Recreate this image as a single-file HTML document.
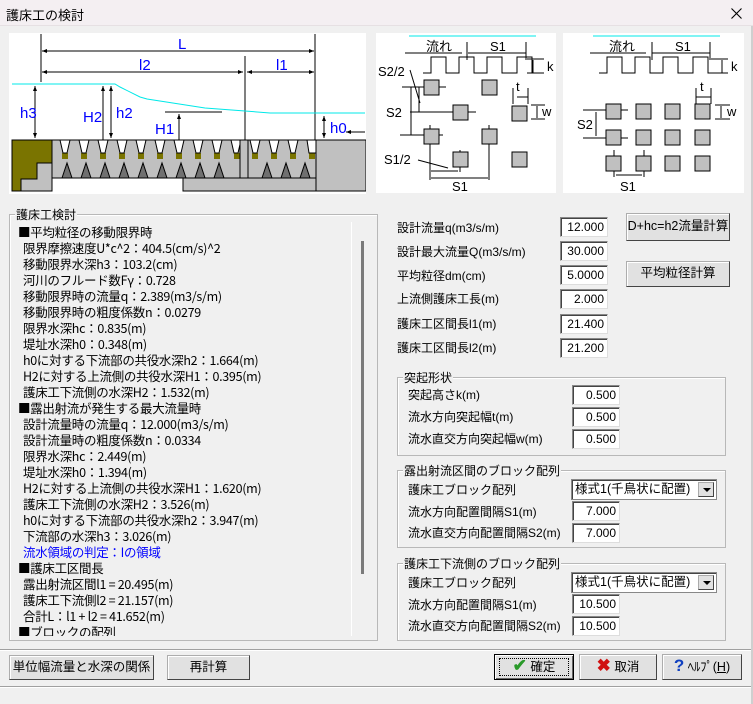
<!DOCTYPE html>
<html><head><meta charset="utf-8"><style>
*{box-sizing:border-box;margin:0;padding:0}
body{width:753px;height:704px;background:#f0f0f0;font-family:"Liberation Sans","Noto Sans CJK JP",sans-serif;font-size:12px;color:#000;position:relative;overflow:hidden}
.a{position:absolute}
#title{left:0;top:0;width:753px;height:26px;background:#f4eff2;border-bottom:1px solid #e6e0e3}
#title span{position:absolute;left:6px;top:5px;font-size:13px}
.grp{position:absolute;border:1px solid #b8b8b8;box-shadow:inset 1px 1px 0 #fff}
.grp .lg{position:absolute;top:-9px;left:5px;background:#f0f0f0;padding:0 1px;font-size:12px}
.lst{font-family:"Noto Sans CJK JP",monospace;font-size:12.5px;line-height:16px;white-space:pre;letter-spacing:-0.3px}
.in{position:absolute;background:#fff;border:1px solid #888;border-right-color:#ddd;border-bottom-color:#ddd;box-shadow:inset 1px 1px 0 #444;text-align:right;padding-right:3px;font-size:12px;line-height:18px;height:20px}
.lb{position:absolute;font-size:12px}
.btn{position:absolute;background:#e1e1e1;border:1px solid #adadad;border-right-color:#444;border-bottom-color:#444;box-shadow:inset 1px 1px 0 #fff;text-align:center;font-size:12.5px}
.cb{position:absolute;background:#fff;border:1px solid #888;box-shadow:inset 1px 1px 0 #444;font-size:12.5px;line-height:18px;padding-left:3px;height:21px}
.cb i{position:absolute;right:2px;top:2px;width:16px;height:15px;background:#e1e1e1;border:1px solid #aaa;border-right-color:#444;border-bottom-color:#444}
.cb i:after{content:"";position:absolute;left:4px;top:5px;border-left:4px solid transparent;border-right:4px solid transparent;border-top:4px solid #000}
</style></head><body>
<div id="title" class="a"><span>護床工の検討</span>
<svg class="a" style="left:731px;top:8px" width="11" height="11"><path d="M0.5 0.5L10.5 10.5M10.5 0.5L0.5 10.5" stroke="#000" stroke-width="1.1"/></svg></div>
<div class="a" style="left:751px;top:26px;width:2px;height:678px;background:#cfcfcf"></div>

<!-- main diagram -->
<svg class="a" style="left:9px;top:33px" width="357" height="161" viewBox="9 33 357 161">
<rect x="9" y="33" width="357" height="161" fill="#fff"/>
<g stroke="#000" stroke-width="1" fill="none">
<line x1="41" y1="34" x2="41" y2="82"/><line x1="315" y1="34" x2="315" y2="140"/><line x1="245" y1="56" x2="245" y2="140"/>
<line x1="42" y1="51" x2="314" y2="51"/><line x1="42" y1="72" x2="243" y2="72"/><line x1="247" y1="72" x2="314" y2="72"/>
<line x1="35" y1="86" x2="35" y2="138"/><line x1="103" y1="86" x2="103" y2="148"/><line x1="111" y1="86" x2="111" y2="138"/>
<line x1="165" y1="112" x2="222" y2="112"/><line x1="179" y1="114" x2="179" y2="148"/>
<line x1="324" y1="116" x2="324" y2="138"/><line x1="346" y1="132" x2="365" y2="132"/>
</g>
<g fill="#000">
<path d="M42 51l5-2v4zM314 51l-5-2v4zM42 72l5-2v4zM243 72l-5-2v4zM247 72l5-2v4zM314 72l-5-2v4z"/>
<path d="M35 86l-2 5h4zM35 138l-2-5h4zM103 86l-2 5h4zM103 148l-2-5h4zM111 86l-2 5h4zM111 138l-2-5h4zM179 114l-2 5h4zM179 148l-2-5h4zM324 116l-2 5h4zM324 138l-2-5h4zM346 132l5-2v4z"/>
</g>
<polyline points="12,84 115,84 120,87 140,97 147,99 205,108 245,111 270,113 365,113" stroke="#00e8e8" fill="none" stroke-width="1"/>
<g font-family="Liberation Sans,sans-serif" font-size="15" fill="#0000ff">
<text x="178" y="49">L</text><text x="139" y="70">l2</text><text x="276" y="70">l1</text>
<text x="20" y="118">h3</text><text x="83" y="122">H2</text><text x="116" y="118">h2</text><text x="155" y="134">H1</text><text x="330" y="133">h0</text>
</g>
<rect x="12" y="140" width="40" height="51" fill="#7a7400" stroke="#000"/>
<path d="M21 191v-12h16v-16h15v28z" fill="#c0c0c0" stroke="#000"/>
<rect x="52" y="140" width="264" height="38" fill="#c0c0c0" stroke="#000"/>
<g fill="#7a7400">
<path d="M62 153h6v6h-6zM81 153h6v6h-6zM100 153h6v6h-6zM119 153h6v6h-6zM138 153h6v6h-6zM157 153h6v6h-6zM176 153h6v6h-6zM195 153h6v6h-6zM214 153h6v6h-6zM234 153h6v6h-6zM252 153h6v6h-6zM271 153h6v6h-6zM290 153h6v6h-6zM309 153h6v6h-6z"/>
</g>
<g fill="#707070" stroke="#000">
<path d="M62 178l5-15 5 15zM81 178l5-15 5 15zM100 178l5-15 5 15zM119 178l5-15 5 15zM138 178l5-15 5 15zM157 178l5-15 5 15zM176 178l5-15 5 15zM195 178l5-15 5 15zM214 178l5-15 5 15zM262 178l5-15 5 15zM281 178l5-15 5 15zM300 178l5-15 5 15z"/>
</g>
<g fill="#fff" stroke="#000">
<path d="M60 140h10l-3 13h-4zM79 140h10l-3 13h-4zM98 140h10l-3 13h-4zM117 140h10l-3 13h-4zM136 140h10l-3 13h-4zM155 140h10l-3 13h-4zM174 140h10l-3 13h-4zM193 140h10l-3 13h-4zM212 140h10l-3 13h-4zM231 140h10l-3 13h-4zM250 140h10l-3 13h-4zM269 140h10l-3 13h-4zM288 140h10l-3 13h-4zM307 140h9v13h-7z"/>
</g>
<rect x="240" y="140" width="8" height="38" fill="#c0c0c0" stroke="#000"/>
<rect x="183" y="178" width="133" height="13" fill="#c0c0c0" stroke="#000"/>
<rect x="316" y="140" width="50" height="51" fill="#c0c0c0" stroke="#000"/>
</svg>

<!-- right diagrams -->
<svg class="a" style="left:375px;top:33px" width="370" height="161" viewBox="375 33 370 161" font-family="Liberation Sans,Noto Sans CJK JP,sans-serif" font-size="13">
<rect x="376" y="33" width="180" height="160" fill="#fff"/><rect x="563" y="33" width="181" height="160" fill="#fff"/>
<line x1="409" y1="36" x2="536" y2="36" stroke="#00e8e8"/><line x1="593" y1="36" x2="720" y2="36" stroke="#00e8e8"/>
<g stroke="#000" fill="none">
<line x1="405" y1="53" x2="462" y2="53"/><line x1="468" y1="53" x2="526" y2="53"/><line x1="467" y1="42" x2="467" y2="60"/><line x1="526" y1="42" x2="526" y2="60"/>
<path d="M423 73h8v-16h15v16h13v-16h15v16h13v-16h15v16h15v-16h15v16h11"/>
<line x1="533" y1="60" x2="533" y2="73"/><line x1="527" y1="59" x2="544" y2="59"/><line x1="527" y1="73" x2="544" y2="73"/>
<line x1="402" y1="87" x2="446" y2="87"/><line x1="411" y1="87" x2="411" y2="135"/><line x1="419" y1="87" x2="419" y2="112"/>
<line x1="410" y1="112" x2="476" y2="112"/><line x1="400" y1="135" x2="443" y2="135"/>
<line x1="410" y1="70" x2="420" y2="103"/><line x1="418" y1="160" x2="448" y2="168"/>
<line x1="430" y1="125" x2="430" y2="180"/><line x1="489" y1="125" x2="489" y2="180"/><line x1="460" y1="150" x2="460" y2="172"/>
<line x1="431" y1="171" x2="458" y2="171"/><line x1="431" y1="178" x2="488" y2="178"/>
<line x1="517" y1="97" x2="528" y2="97"/>
<line x1="513" y1="88" x2="513" y2="104"/><line x1="528" y1="88" x2="528" y2="104"/><line x1="531" y1="105" x2="545" y2="105"/><line x1="531" y1="119" x2="545" y2="119"/><line x1="537" y1="106" x2="537" y2="118"/>
<line x1="590" y1="53" x2="646" y2="53"/><line x1="652" y1="53" x2="710" y2="53"/><line x1="652" y1="42" x2="652" y2="60"/><line x1="710" y1="42" x2="710" y2="60"/>
<path d="M599 73h8v-16h15v16h13v-16h15v16h13v-16h15v16h15v-16h15v16h11"/>
<line x1="722" y1="60" x2="722" y2="73"/><line x1="711" y1="59" x2="728" y2="59"/><line x1="711" y1="73" x2="728" y2="73"/>
<line x1="696" y1="97" x2="711" y2="97"/><line x1="696" y1="88" x2="696" y2="104"/><line x1="711" y1="88" x2="711" y2="104"/>
<line x1="715" y1="105" x2="730" y2="105"/><line x1="715" y1="119" x2="730" y2="119"/><line x1="721" y1="106" x2="721" y2="118"/>
<line x1="583" y1="110" x2="628" y2="110"/><line x1="583" y1="138" x2="628" y2="138"/><line x1="596" y1="112" x2="596" y2="136"/>
<line x1="614" y1="150" x2="614" y2="177"/><line x1="644" y1="150" x2="644" y2="177"/><line x1="616" y1="175" x2="642" y2="175"/>
</g>
<g fill="#c0c0c0" stroke="#000">
<rect x="424" y="80" width="15" height="15"/><rect x="482" y="80" width="15" height="15"/><rect x="512" y="106" width="15" height="15"/>
<rect x="453" y="105" width="15" height="15"/><rect x="424" y="129" width="15" height="15"/><rect x="482" y="129" width="15" height="15"/>
<rect x="453" y="152" width="15" height="15"/><rect x="512" y="152" width="15" height="15"/>
<rect x="606" y="104" width="15" height="15"/><rect x="636" y="104" width="15" height="15"/><rect x="665" y="104" width="15" height="15"/><rect x="695" y="104" width="15" height="15"/>
<rect x="606" y="130" width="15" height="15"/><rect x="636" y="130" width="15" height="15"/><rect x="665" y="130" width="15" height="15"/><rect x="695" y="130" width="15" height="15"/>
<rect x="606" y="156" width="15" height="15"/><rect x="636" y="156" width="15" height="15"/><rect x="665" y="156" width="15" height="15"/><rect x="695" y="156" width="15" height="15"/>
</g>
<g fill="#000">
<text x="426" y="51">流れ</text><text x="490" y="51">S1</text><text x="547" y="71">k</text>
<text x="378" y="76">S2/2</text><text x="386" y="117">S2</text><text x="384" y="164">S1/2</text><text x="452" y="191">S1</text>
<text x="516" y="91">t</text><text x="542" y="116">w</text>
<text x="609" y="51">流れ</text><text x="675" y="51">S1</text><text x="731" y="71">k</text>
<text x="700" y="91">t</text><text x="727" y="116">w</text><text x="577" y="129">S2</text><text x="620" y="191">S1</text>
</g>
</svg>

<!-- left group -->
<div class="grp" style="left:9px;top:214px;width:369px;height:427px"><span class="lg">護床工検討</span></div>
<div class="a" style="left:361px;top:241px;width:3px;height:333px;background:#7a7a7a"></div>
<div class="a" style="left:351px;top:222px;width:1px;height:414px;background:#fff"></div>
<div class="a lst" style="left:18px;top:224px;height:412px;overflow:hidden">■平均粒径の移動限界時
  限界摩擦速度U*c^2：404.5(cm/s)^2
  移動限界水深h3：103.2(cm)
  河川のフルード数Fγ：0.728
  移動限界時の流量q：2.389(m3/s/m)
  移動限界時の粗度係数n：0.0279
  限界水深hc：0.835(m)
  堤址水深h0：0.348(m)
  h0に対する下流部の共役水深h2：1.664(m)
  H2に対する上流側の共役水深H1：0.395(m)
  護床工下流側の水深H2：1.532(m)
■露出射流が発生する最大流量時
  設計流量時の流量q：12.000(m3/s/m)
  設計流量時の粗度係数n：0.0334
  限界水深hc：2.449(m)
  堤址水深h0：1.394(m)
  H2に対する上流側の共役水深H1：1.620(m)
  護床工下流側の水深H2：3.526(m)
  h0に対する下流部の共役水深h2：3.947(m)
  下流部の水深h3：3.026(m)
  <span style="color:#0000ff">流水領域の判定：Iの領域</span>
■護床工区間長
  露出射流区間l1 = 20.495(m)
  護床工下流側l2 = 21.157(m)
  合計L：l1 + l2 = 41.652(m)
■ブロックの配列</div>

<!-- right inputs -->
<div class="lb" style="left:397px;top:219px">設計流量q(m3/s/m)</div><div class="in" style="left:560px;top:217px;width:48px">12.000</div>
<div class="lb" style="left:397px;top:243px">設計最大流量Q(m3/s/m)</div><div class="in" style="left:560px;top:241px;width:48px">30.000</div>
<div class="lb" style="left:397px;top:267px">平均粒径dm(cm)</div><div class="in" style="left:560px;top:265px;width:48px">5.0000</div>
<div class="lb" style="left:397px;top:290px">上流側護床工長(m)</div><div class="in" style="left:560px;top:289px;width:48px">2.000</div>
<div class="lb" style="left:397px;top:315px">護床工区間長l1(m)</div><div class="in" style="left:560px;top:314px;width:48px">21.400</div>
<div class="lb" style="left:397px;top:339px">護床工区間長l2(m)</div><div class="in" style="left:560px;top:338px;width:48px">21.200</div>
<div class="btn" style="left:626px;top:213px;width:104px;height:28px;line-height:25px">D+hc=h2流量計算</div>
<div class="btn" style="left:626px;top:261px;width:104px;height:26px;line-height:23px">平均粒径計算</div>

<div class="grp" style="left:397px;top:377px;width:329px;height:79px"><span class="lg">突起形状</span></div>
<div class="lb" style="left:408px;top:386px">突起高さk(m)</div><div class="in" style="left:572px;top:385px;width:48px">0.500</div>
<div class="lb" style="left:408px;top:408px">流水方向突起幅t(m)</div><div class="in" style="left:572px;top:407px;width:48px">0.500</div>
<div class="lb" style="left:408px;top:430px">流水直交方向突起幅w(m)</div><div class="in" style="left:572px;top:429px;width:48px">0.500</div>

<div class="grp" style="left:397px;top:470px;width:329px;height:78px"><span class="lg">露出射流区間のブロック配列</span></div>
<div class="lb" style="left:408px;top:481px">護床工ブロック配列</div><div class="cb" style="left:571px;top:479px;width:146px">様式1(千鳥状に配置)<i></i></div>
<div class="lb" style="left:408px;top:503px">流水方向配置間隔S1(m)</div><div class="in" style="left:572px;top:501px;width:48px">7.000</div>
<div class="lb" style="left:408px;top:524px">流水直交方向配置間隔S2(m)</div><div class="in" style="left:572px;top:523px;width:48px">7.000</div>

<div class="grp" style="left:397px;top:563px;width:329px;height:78px"><span class="lg">護床工下流側のブロック配列</span></div>
<div class="lb" style="left:408px;top:574px">護床工ブロック配列</div><div class="cb" style="left:571px;top:572px;width:146px">様式1(千鳥状に配置)<i></i></div>
<div class="lb" style="left:408px;top:596px">流水方向配置間隔S1(m)</div><div class="in" style="left:572px;top:594px;width:48px">10.500</div>
<div class="lb" style="left:408px;top:617px">流水直交方向配置間隔S2(m)</div><div class="in" style="left:572px;top:616px;width:48px">10.500</div>

<!-- bottom -->
<div class="a" style="left:0;top:649px;width:751px;height:2px;border-top:1px solid #a0a0a0;border-bottom:1px solid #fff"></div>
<div class="a" style="left:0;top:686px;width:751px;height:2px;border-top:1px solid #a0a0a0;border-bottom:1px solid #fff"></div>
<div class="btn" style="left:9px;top:655px;width:145px;height:25px;line-height:22px">単位幅流量と水深の関係</div>
<div class="btn" style="left:167px;top:655px;width:83px;height:25px;line-height:22px">再計算</div>
<div class="btn" style="left:494px;top:654px;width:80px;height:26px;line-height:22px;border:1px solid #000;box-shadow:inset 1px 1px 0 #fff,inset -1px -1px 0 #666"><div style="position:absolute;left:4px;top:3px;right:4px;bottom:3px;border:1px dotted #000"></div><span style="color:#2a9a2a;font-size:17px;font-weight:bold">✔</span> 確定</div>
<div class="btn" style="left:579px;top:654px;width:78px;height:26px;line-height:22px"><span style="color:#d01010;font-size:17px;font-weight:bold">✖</span> 取消</div>
<div class="btn" style="left:662px;top:654px;width:80px;height:26px;line-height:22px"><span style="color:#1040c0;font-size:17px;font-weight:bold">?</span> ﾍﾙﾌﾟ(<u>H</u>)</div>
</body></html>
